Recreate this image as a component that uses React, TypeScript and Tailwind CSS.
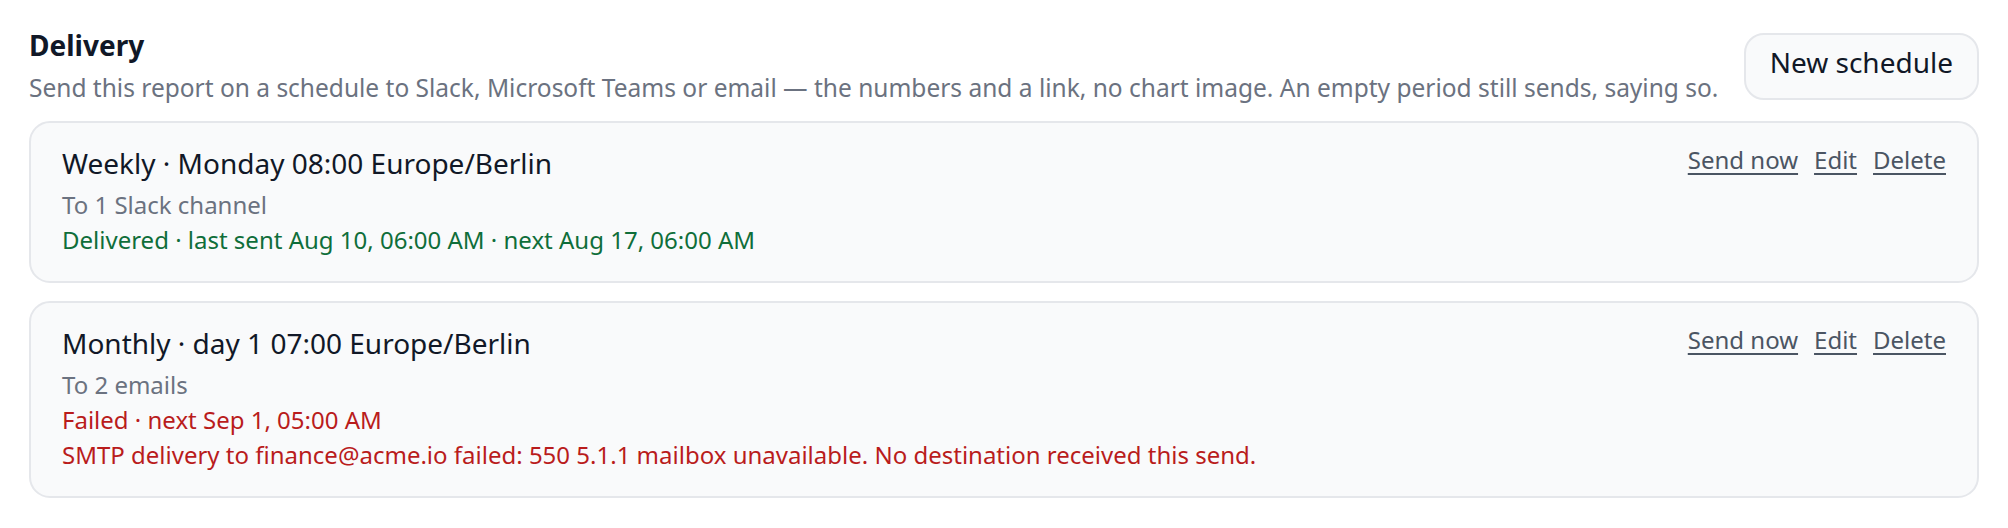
import React from "react";

type Sched = {
  title: string;
  to: string;
  lines: { text: string; tone: "ok" | "err" }[];
};

const schedules: Sched[] = [
  {
    title: "Weekly · Monday 08:00 Europe/Berlin",
    to: "To 1 Slack channel",
    lines: [
      { text: "Delivered · last sent Aug 10, 06:00 AM · next Aug 17, 06:00 AM", tone: "ok" },
    ],
  },
  {
    title: "Monthly · day 1 07:00 Europe/Berlin",
    to: "To 2 emails",
    lines: [
      { text: "Failed · next Sep 1, 05:00 AM", tone: "err" },
      {
        text: "SMTP delivery to finance@acme.io failed: 550 5.1.1 mailbox unavailable. No destination received this send.",
        tone: "err",
      },
    ],
  },
];

function Card({ s }: { s: Sched }) {
  return (
    <div className="flex items-start justify-between rounded-[21px] border-2 border-[#e5e7eb] bg-[#f9fafb] pl-[31px] pr-[31px] pt-[21px] pb-[24px]">
      <div className="flex flex-col">
        <div className="text-[28px] leading-[39px] text-[#111827]">{s.title}</div>
        <div className="mt-[4px] text-[24px] leading-[35px] text-[#6b7280]">{s.to}</div>
        {s.lines.map((l, i) => (
          <div
            key={i}
            className={
              l.tone === "ok"
                ? "text-[24px] leading-[35px] text-[#0f6e3a]"
                : "text-[24px] leading-[35px] text-[#b91c1c]"
            }
          >
            {l.text}
          </div>
        ))}
      </div>
      <div className="-mt-[2px] flex items-center gap-[16px] text-[24px] leading-[35px] text-[#4b5563]">
        <a className="underline underline-offset-[4px] decoration-[2px] cursor-pointer">Send now</a>
        <a className="underline underline-offset-[4px] decoration-[2px] cursor-pointer">Edit</a>
        <a className="underline underline-offset-[4px] decoration-[2px] cursor-pointer">Delete</a>
      </div>
    </div>
  );
}

export default function App() {
  return (
    <div className="min-h-[528px] w-full bg-white px-[29px] pt-[24px] font-['Noto_Sans','Open_Sans',sans-serif]">
      <div className="mb-[16px] flex items-start justify-between">
        <div className="flex flex-col">
          <h2 className="text-[28px] font-bold leading-[42px] text-[#111827]">Delivery</h2>
          <p className="mt-[4px] text-[24.5px] leading-[35px] text-[#6b7280]">
            Send this report on a schedule to Slack, Microsoft Teams or email — the numbers and a link, no chart image. An empty period still sends, saying so.
          </p>
        </div>
        <button className="mt-[9px] h-[67px] rounded-[20px] border-2 border-[#e5e7eb] bg-[#f9fafb] px-[24px] pt-[8px] pb-[17px] text-[28px] leading-[38px] text-[#111827]">
          New schedule
        </button>
      </div>
      <div className="flex flex-col gap-[18px]">
        {schedules.map((s, i) => (
          <Card key={i} s={s} />
        ))}
      </div>
    </div>
  );
}
